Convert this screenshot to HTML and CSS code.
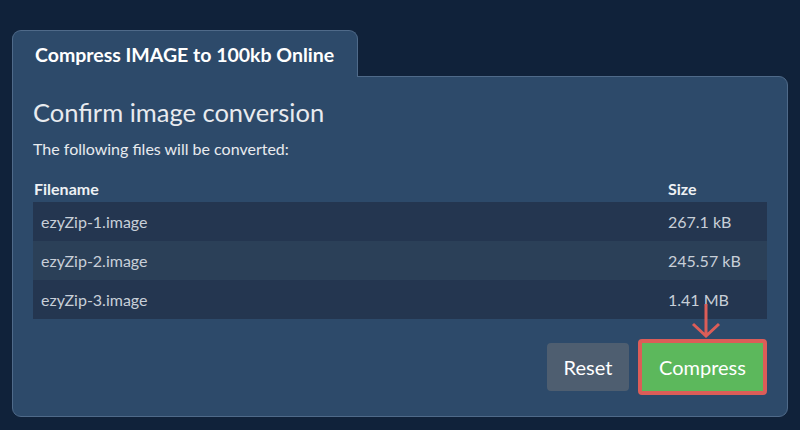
FILE: index.html
```html
<!DOCTYPE html>
<html>
<head>
<meta charset="utf-8">
<link rel="stylesheet" href="styles.css">
</head>
<body>
<div class="wrap">
  <div class="tab">Compress IMAGE to 100kb Online</div>
  <div class="card">
    <h1 class="title">Confirm image conversion</h1>
    <p class="lead">The following files will be converted:</p>
    <table class="files">
      <thead>
        <tr><th>Filename</th><th class="size">Size</th></tr>
      </thead>
      <tbody>
        <tr><td>ezyZip-1.image</td><td class="size">267.1 kB</td></tr>
        <tr><td>ezyZip-2.image</td><td class="size">245.57 kB</td></tr>
        <tr><td>ezyZip-3.image</td><td class="size">1.41 MB</td></tr>
      </tbody>
    </table>
    <div class="actions">
      <button class="btn reset">Reset</button>
      <div class="highlight">
        <svg class="arrow" width="32" height="38" viewBox="0 0 32 38">
          <path d="M16 2 V34 M3 22 L16 34 L29 22" fill="none" stroke="#dc5d58" stroke-width="3"/>
        </svg>
        <button class="btn compress">Compress</button>
      </div>
    </div>
  </div>
</div>
</body>
</html>
```
FILE: styles.css
```css
html, body {
  margin: 0;
  padding: 0;
  background: #10223a;
  font-family: Lato, "Open Sans", sans-serif;
}
.wrap {
  padding: 30px 12px 15px 12px;
}
.tab {
  display: inline-block;
  box-sizing: border-box;
  width: 346px;
  height: 47px;
  padding: 13px 0 0 22px;
  background: #2d4a6a;
  border: 1px solid #4f6a89;
  border-bottom: none;
  border-radius: 9px 9px 0 0;
  color: #ffffff;
  font-weight: 700;
  font-size: 19.5px;
  line-height: 22px;
  position: relative;
  z-index: 1;
  margin-bottom: -1px;
}
.card {
  background: #2d4a6a;
  border: 1px solid #4f6a89;
  border-radius: 0 9px 9px 9px;
  padding: 20px 20px 21px 20px;
}
.title {
  margin: 0;
  font-weight: 400;
  font-size: 25.5px;
  line-height: 30px;
  color: #e8ebef;
}
.lead {
  margin: 13px 0 22px 0;
  font-size: 16px;
  line-height: 18px;
  color: #e8ebef;
}
.files {
  width: 100%;
  border-collapse: collapse;
  font-size: 16px;
}
.files th {
  text-align: left;
  color: #eef1f4;
  font-weight: 700;
  padding: 0 0 4px 1px;
  line-height: 18px;
}
.files td {
  height: 39px;
  padding: 0 8px;
  color: #c8cfd8;
}
.files th.size, .files td.size {
  width: 91px;
  padding-left: 8px;
}
.files tbody tr:nth-child(odd) { background: #243650; }
.files tbody tr:nth-child(even) { background: #2b4058; }
.actions {
  display: flex;
  justify-content: flex-end;
  align-items: center;
  gap: 9px;
  margin-top: 20px;
}
.btn {
  font-family: Lato, "Open Sans", sans-serif;
  font-size: 20px;
  border: none;
  color: #ffffff;
  cursor: pointer;
}
.reset {
  background: #4e5e70;
  width: 82px;
  height: 48px;
  border-radius: 4px;
}
.highlight {
  position: relative;
  border: 4px solid #dc5d58;
  border-radius: 4px;
  display: flex;
}
.compress {
  background: #5cb85c;
  width: 121px;
  height: 48px;
}
.arrow {
  position: absolute;
  left: 48px;
  top: -41px;
}
```
